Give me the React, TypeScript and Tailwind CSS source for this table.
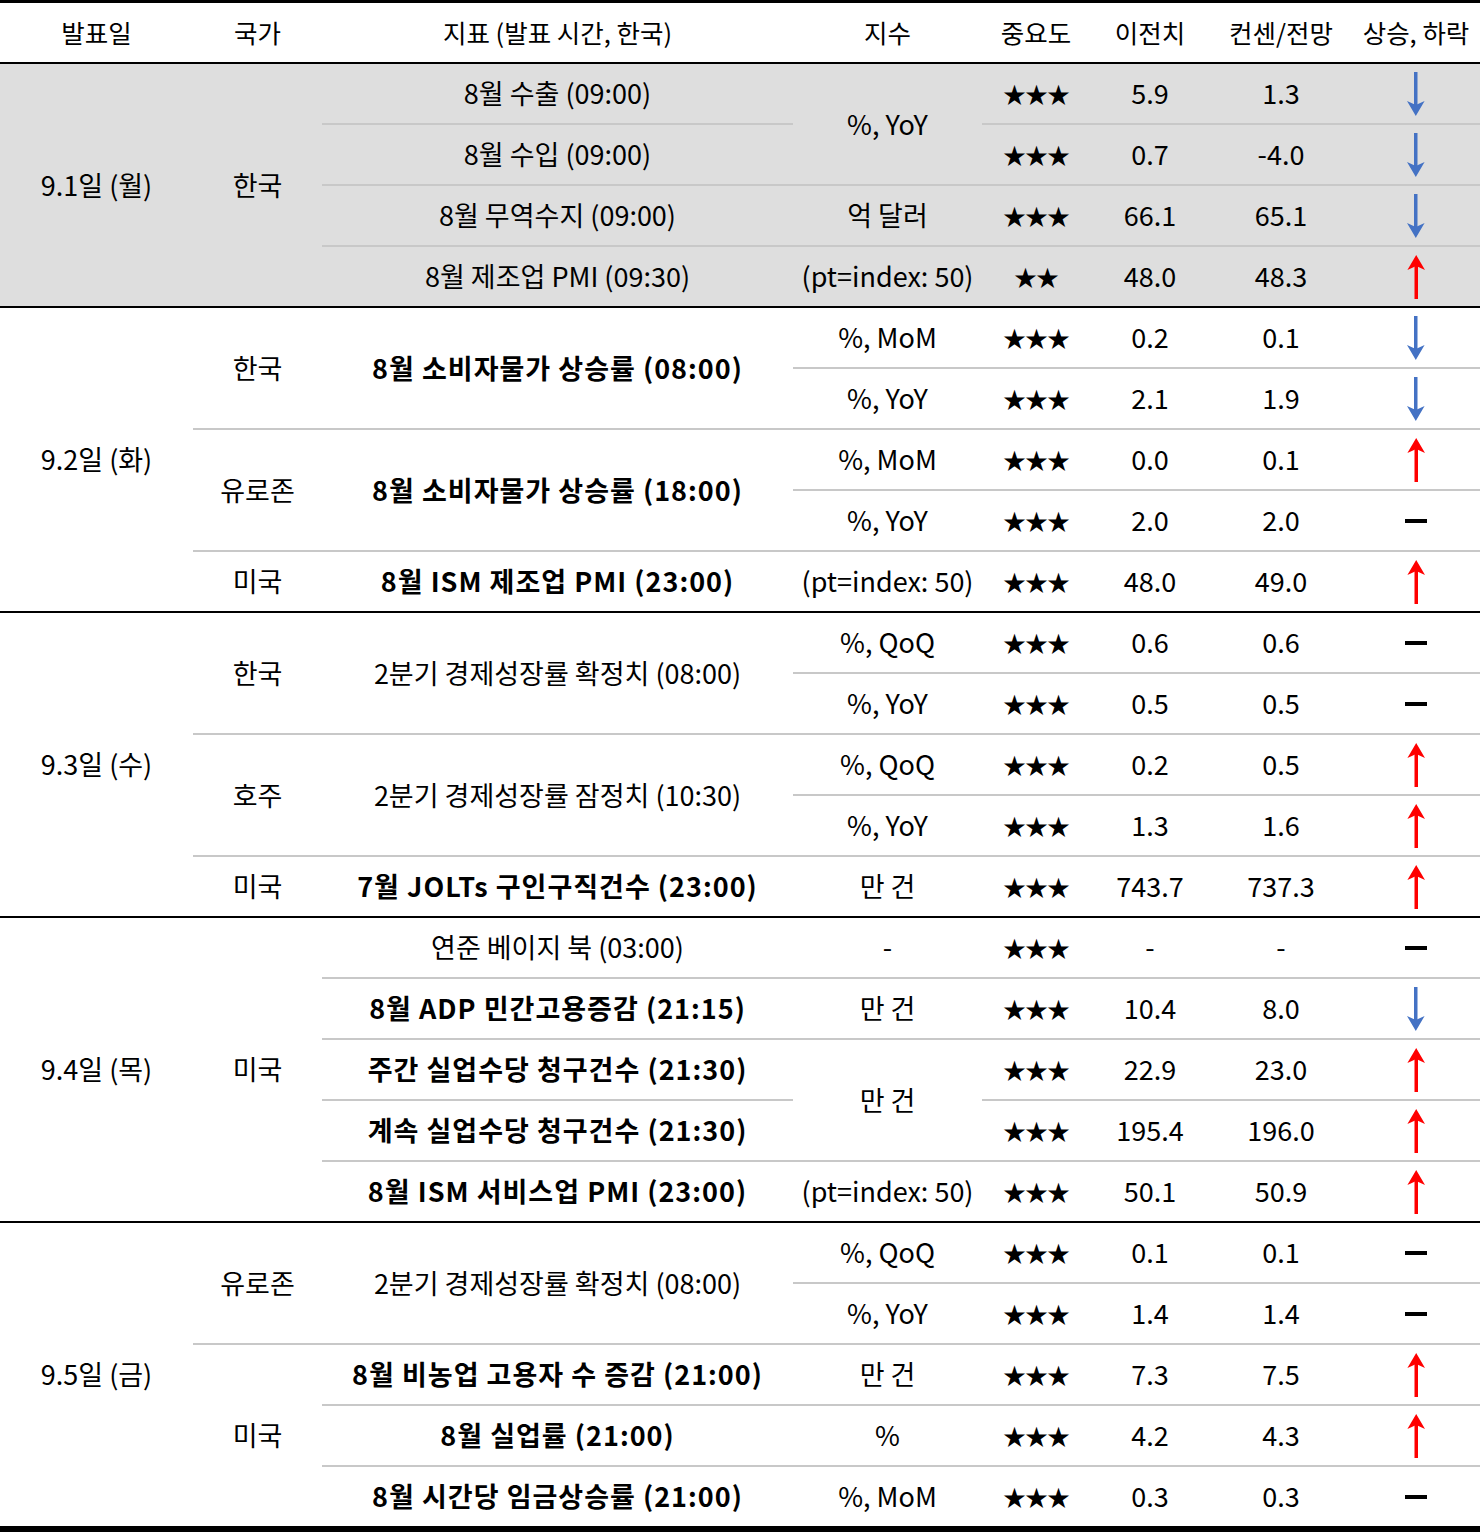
import type { ReactNode } from 'react';

type Kind = 'up' | 'down' | 'dash';
type Cell = { t?: ReactNode; span?: number; bold?: boolean; icon?: Kind; stars?: boolean };

const FONT = { fontFamily: '"Noto Sans CJK KR", "Noto Sans", sans-serif' };

const COLS = 'grid grid-cols-[193px_129px_471px_189px_108px_120px_142px_128px] auto-rows-[61px]';

const spanCls: Record<number, string> = {
  1: '',
  2: 'row-span-2',
  3: 'row-span-3',
  4: 'row-span-4',
  5: 'row-span-5',
};

const c = (t: ReactNode, span = 1): Cell => ({ t, span });
const b = (t: ReactNode, span = 1): Cell => ({ t, span, bold: true });
const s3: Cell = { t: '★★★', stars: true };
const s2: Cell = { t: '★★', stars: true };
const UP: Cell = { icon: 'up' };
const DOWN: Cell = { icon: 'down' };
const DASH: Cell = { icon: 'dash' };

const groups: { gray?: boolean; rows: Cell[][] }[] = [
  {
    gray: true,
    rows: [
      [c('9.1일 (월)', 4), c('한국', 4), c('8월 수출 (09:00)'), c('%, YoY', 2), s3, c('5.9'), c('1.3'), DOWN],
      [c('8월 수입 (09:00)'), s3, c('0.7'), c('-4.0'), DOWN],
      [c('8월 무역수지 (09:00)'), c('억 달러'), s3, c('66.1'), c('65.1'), DOWN],
      [c('8월 제조업 PMI (09:30)'), c('(pt=index: 50)'), s2, c('48.0'), c('48.3'), UP],
    ],
  },
  {
    rows: [
      [c('9.2일 (화)', 5), c('한국', 2), b('8월 소비자물가 상승률 (08:00)', 2), c('%, MoM'), s3, c('0.2'), c('0.1'), DOWN],
      [c('%, YoY'), s3, c('2.1'), c('1.9'), DOWN],
      [c('유로존', 2), b('8월 소비자물가 상승률 (18:00)', 2), c('%, MoM'), s3, c('0.0'), c('0.1'), UP],
      [c('%, YoY'), s3, c('2.0'), c('2.0'), DASH],
      [c('미국'), b('8월 ISM 제조업 PMI (23:00)'), c('(pt=index: 50)'), s3, c('48.0'), c('49.0'), UP],
    ],
  },
  {
    rows: [
      [c('9.3일 (수)', 5), c('한국', 2), c('2분기 경제성장률 확정치 (08:00)', 2), c('%, QoQ'), s3, c('0.6'), c('0.6'), DASH],
      [c('%, YoY'), s3, c('0.5'), c('0.5'), DASH],
      [c('호주', 2), c('2분기 경제성장률 잠정치 (10:30)', 2), c('%, QoQ'), s3, c('0.2'), c('0.5'), UP],
      [c('%, YoY'), s3, c('1.3'), c('1.6'), UP],
      [c('미국'), b('7월 JOLTs 구인구직건수 (23:00)'), c('만 건'), s3, c('743.7'), c('737.3'), UP],
    ],
  },
  {
    rows: [
      [c('9.4일 (목)', 5), c('미국', 5), c('연준 베이지 북 (03:00)'), c('-'), s3, c('-'), c('-'), DASH],
      [b('8월 ADP 민간고용증감 (21:15)'), c('만 건'), s3, c('10.4'), c('8.0'), DOWN],
      [b('주간 실업수당 청구건수 (21:30)'), c('만 건', 2), s3, c('22.9'), c('23.0'), UP],
      [b('계속 실업수당 청구건수 (21:30)'), s3, c('195.4'), c('196.0'), UP],
      [b('8월 ISM 서비스업 PMI (23:00)'), c('(pt=index: 50)'), s3, c('50.1'), c('50.9'), UP],
    ],
  },
  {
    rows: [
      [c('9.5일 (금)', 5), c('유로존', 2), c('2분기 경제성장률 확정치 (08:00)', 2), c('%, QoQ'), s3, c('0.1'), c('0.1'), DASH],
      [c('%, YoY'), s3, c('1.4'), c('1.4'), DASH],
      [c('미국', 3), b('8월 비농업 고용자 수 증감 (21:00)'), c('만 건'), s3, c('7.3'), c('7.5'), UP],
      [b('8월 실업률 (21:00)'), c('%'), s3, c('4.2'), c('4.3'), UP],
      [b('8월 시간당 임금상승률 (21:00)'), c('%, MoM'), s3, c('0.3'), c('0.3'), DASH],
    ],
  },
];

const headers = ['발표일', '국가', '지표 (발표 시간, 한국)', '지수', '중요도', '이전치', '컨센/전망', '상승, 하락'];

function Arrow({ dir }: { dir: 'up' | 'down' }) {
  const color = dir === 'up' ? '#ff0000' : '#4472c4';
  return (
    <svg width="24" height="46" viewBox="0 0 24 46" className={dir === 'down' ? 'rotate-180' : ''}>
      <rect x="10.5" y="10" width="3.5" height="35" fill={color} />
      <polygon points="12.2,1 21,16 12.2,12 3.4,16" fill={color} />
    </svg>
  );
}

function CellView({ cell, line }: { cell: Cell; line: 'gray' | 'black' }) {
  const border = line === 'black' ? 'border-black' : 'border-[#c8c8c8]';
  let body: ReactNode = cell.t;
  if (cell.icon === 'up' || cell.icon === 'down') body = <Arrow dir={cell.icon} />;
  else if (cell.icon === 'dash') body = <div className="w-[22px] h-[4px] bg-black" />;
  return (
    <div
      className={`flex items-center justify-center border-b-2 ${border} ${spanCls[cell.span ?? 1]} ${
        cell.stars ? 'text-[23px] tracking-[-1px]' : cell.bold ? 'text-[27px] font-bold tracking-[1px]' : 'text-[27px]'
      } whitespace-nowrap text-black`}
    >
      {body}
    </div>
  );
}

export default function App() {
  return (
    <div className="w-[1480px] bg-white" style={FONT}>
      <div className="border-t-[3px] border-b-[4px] border-black">
        <div className={COLS}>
          {headers.map((h) => (
            <div key={h} className="flex items-center justify-center border-b-2 border-black text-[25.5px] text-black h-[61px]">
              {h}
            </div>
          ))}
        </div>
        {groups.map((g, gi) => (
          <div key={gi} className={`${COLS} ${g.gray ? 'bg-[#dedede]' : 'bg-white'}`}>
            {g.rows.map((row, ri) =>
              row.map((cell, ci) => (
                <CellView
                  key={`${ri}-${ci}`}
                  cell={cell}
                  line={ri + (cell.span ?? 1) === g.rows.length ? 'black' : 'gray'}
                />
              )),
            )}
          </div>
        ))}
      </div>
    </div>
  );
}
